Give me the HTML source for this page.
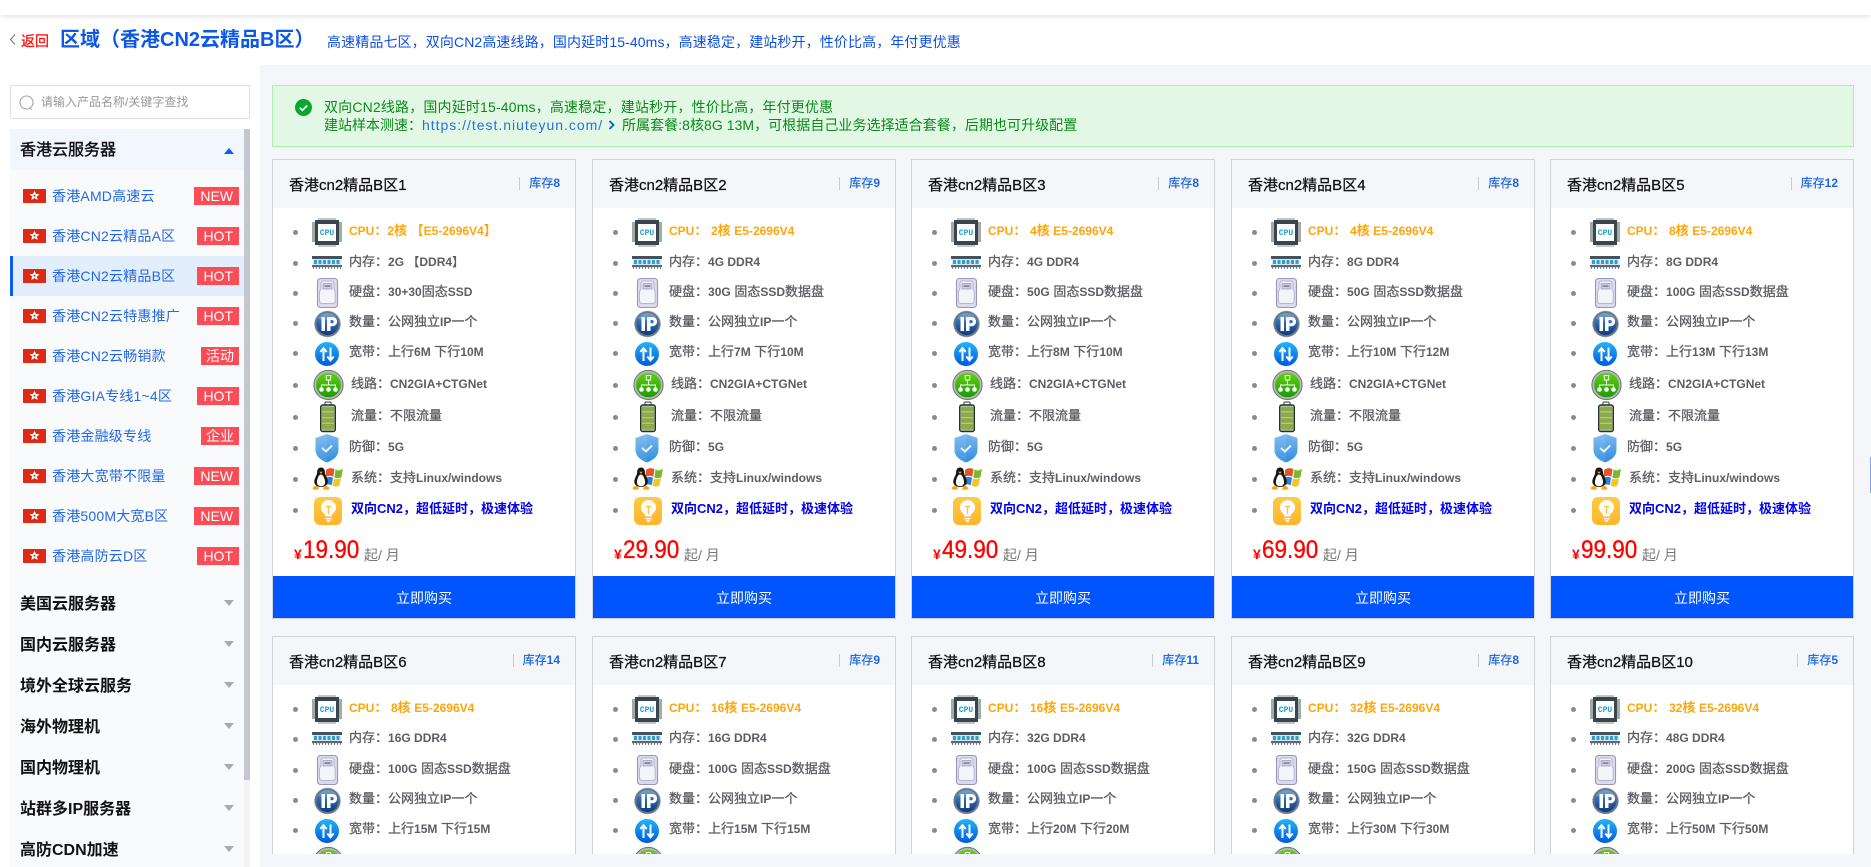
<!DOCTYPE html>
<html lang="zh-CN"><head><meta charset="utf-8"><title>区域（香港CN2云精品B区）</title>
<style>
*{box-sizing:border-box;margin:0;padding:0}
html,body{width:1871px;height:867px;overflow:hidden;background:#fff;font-family:"Liberation Sans","Noto Sans CJK SC",sans-serif}
#top{position:absolute;left:0;top:0;width:1871px;height:15px;background:#fff;box-shadow:0 1px 6px rgba(0,0,0,.14);z-index:3}
#main{position:absolute;left:260px;top:65px;width:1611px;height:802px;background:#f5f6fa}
#back{position:absolute;left:21px;top:31px;font-size:14px;line-height:20px;font-weight:400;-webkit-text-stroke:.3px #f11;color:#f11}
#title{position:absolute;left:60px;top:26px;font-size:20px;line-height:29px;font-weight:700;color:#0b57e8;white-space:nowrap}
#sub{position:absolute;left:327px;top:31px;font-size:14px;line-height:22px;color:#0b4fe0;white-space:nowrap;letter-spacing:.11px}
#search{position:absolute;left:10px;top:85px;width:240px;height:34px;border:1px solid #dcdfe6;border-radius:2px;background:#fff;font-size:12px;color:#999;line-height:32px;padding-left:30px}
#side{position:absolute;left:10px;top:129px;width:234px;height:738px;background:#f9fafc;overflow:hidden}
#sb{position:absolute;left:244px;top:129px;width:6px;height:738px;background:#f3f3f3}
#sb i{display:block;height:651px;background:#c3c7cf}
.mh{position:absolute;left:0;width:234px;height:41px;line-height:43px;padding-left:10px;font-size:16px;font-weight:700;color:#111;white-space:nowrap}
.mh i{position:absolute;left:214px;top:17px;border:5px solid transparent;border-top:6px solid #aaa;border-bottom:0}
.mh.on{background:#f1f6ff;font-weight:400;-webkit-text-stroke:.4px #111}
.mh.on i{border-top:0;border-bottom:6px solid #0b5cf0}
.it{position:absolute;left:0;width:234px;height:40px;line-height:40px;padding-left:42px;font-size:14px;color:#2468e4;white-space:nowrap;letter-spacing:.2px}
.it.on{background:#e2eefc;box-shadow:inset 3px 0 0 #0b5cf0}
.it svg{position:absolute;left:13px;top:13px;width:23px;height:14px}
.it b{position:absolute;right:5px;top:11px;height:18px;line-height:18px;padding:0 6px;background:#fb4d55;color:#fff;font-size:14px;font-weight:400;letter-spacing:0}
.it b.z{padding:0 5px}
#clip{position:absolute;left:0;top:0;width:1871px;height:854px;overflow:hidden}
#note{position:absolute;left:272px;top:85px;width:1582px;height:62px;background:#e2f7e4;border:1px solid #abf0ac;color:#0a8a1a;font-size:14px;line-height:19px}
#note div{position:absolute;left:51px;white-space:nowrap}
#note a{color:#2a6fe8;letter-spacing:.98px;text-decoration:none}
.card{position:absolute;width:304px;height:460px;background:#fff;border:1px solid #d3d3da}
.card.r2{height:219px;overflow:hidden}
.h{position:absolute;left:0;top:0;width:302px;height:48px;background:#f5f6fa}
.t{position:absolute;left:16px;top:14px;font-size:15px;line-height:24px;font-weight:400;-webkit-text-stroke:.25px #111;color:#111;white-space:nowrap}
.s{position:absolute;right:15px;top:17px;font-size:12px;line-height:13px;font-weight:400;-webkit-text-stroke:.2px #1a66e0;color:#1a66e0;border-left:1px solid #ccc;padding-left:9px;white-space:nowrap;height:13px}
.s b{font-weight:700;-webkit-text-stroke:0}
.r{position:absolute;left:76px;height:0;white-space:nowrap;font-size:13px;font-weight:400;-webkit-text-stroke:.3px #5c5e63;color:#5c5e63;line-height:0}
.r u{text-decoration:none;font-size:12px;font-weight:700;-webkit-text-stroke:0}
.r.x{left:78px}
.r::before{content:"";position:absolute;width:5px;height:5px;border-radius:50%;background:#8a8a94;top:-1px;left:-56px}
.r.x::before{left:-58px}
.r svg{position:absolute;top:-17px;left:-39px;width:34px;height:34px}
.r.x svg{left:-41px}
.c{color:#ffa50a;font-weight:700;-webkit-text-stroke:0}
.r.l{color:#0000f0;font-weight:700;-webkit-text-stroke:0}
.p{position:absolute;left:21px;top:375px;height:36px;white-space:nowrap;color:#f00}
.p em{font-style:normal;font-size:14px;font-weight:700;position:absolute;left:0;top:10px;line-height:18px}
.p b{font-weight:400;-webkit-text-stroke:.35px #f00;font-size:25px;line-height:30px;position:absolute;left:9px;top:0;display:block;transform:scaleX(.9);transform-origin:0 0}
.p i{font-style:normal;font-size:14px;color:#777;position:absolute;left:70px;top:10px;line-height:20px}
.b{position:absolute;left:0;top:416px;width:302px;height:42px;background:#0055ff;color:#fff;font-size:14px;line-height:44px;text-align:center}
.r.c{-webkit-text-stroke:0}
</style></head><body>
<svg width="0" height="0" style="position:absolute">
<defs>
<linearGradient id="gb" x1="0" y1="0" x2="0" y2="1"><stop offset="0" stop-color="#22b4f8"/><stop offset="1" stop-color="#0059dc"/></linearGradient>
<linearGradient id="gg" x1="0" y1="0" x2="0" y2="1"><stop offset="0" stop-color="#66cc18"/><stop offset=".5" stop-color="#3cb808"/><stop offset="1" stop-color="#1f9a04"/></linearGradient>
<linearGradient id="gi" x1="0" y1="0" x2="0" y2="1"><stop offset="0" stop-color="#4f8cd0"/><stop offset="1" stop-color="#0c3a80"/></linearGradient>
<linearGradient id="gs" x1="0" y1="0" x2="0" y2="1"><stop offset="0" stop-color="#7ab8ee"/><stop offset="1" stop-color="#2f8ee0"/></linearGradient>
<linearGradient id="gy" x1="0" y1="0" x2="0" y2="1"><stop offset="0" stop-color="#ffcb45"/><stop offset="1" stop-color="#ffb52b"/></linearGradient>
<symbol id="fl" viewBox="0 0 23 14"><rect width="23" height="14" fill="#de2a12"/><path d="M11.5 1.800l1.500 3.200 3.500.3-2.700 2.300.9 3.400-3.200-1.900-3.200 1.900.9-3.400-2.700-2.300 3.500-.3z" fill="#fff"/><circle cx="11.5" cy="6.800" r="1" fill="#de2a12"/></symbol>
<symbol id="i1" viewBox="0 0 34 34"><path d="M9 4v3M11 4v3M13 4v3M15 4v3M17 4v3M19 4v3M21 4v3M23 4v3M25 4v3M9 30v3M11 30v3M13 30v3M15 30v3M17 30v3M19 30v3M21 30v3M23 30v3M25 30v3" stroke="#8a8f94" stroke-width="1"/><path d="M2 9h4M2 11h4M2 13h4M2 15h4M2 17h4M2 19h4M2 21h4M2 23h4M2 25h4M2 27h4M28 9h4M28 11h4M28 13h4M28 15h4M28 17h4M28 19h4M28 21h4M28 23h4M28 25h4M28 27h4" stroke="#4a5358" stroke-width="1"/><rect x="5" y="6" width="24" height="25" fill="#38464d"/><rect x="8" y="10" width="18" height="17" fill="#fff"/><text x="17" y="21" font-family="Liberation Mono,monospace" font-size="8" font-weight="700" fill="#1c9fd0" text-anchor="middle" style="-webkit-text-stroke:0">CPU</text></symbol>
<symbol id="i2" viewBox="0 0 34 34"><rect x="2" y="11" width="30" height="3" fill="#46525a"/><rect x="3" y="14" width="28" height="6" fill="#d9e6ee"/><path d="M4 15h3v4H4zM8.500 15h3v4h-3zM13 15h3v4h-3zM17.500 15h3v4h-3zM22 15h3v4h-3zM26.500 15h3v4h-3z" fill="#2f9fd0"/><rect x="2" y="20" width="30" height="2.200" fill="#5b6a70"/><path d="M3 22h1v2H3zM6 22h1v2H6zM9 22h1v2H9zM12 22h1v2h-1zM15 22h1v2h-1zM18 22h1v2h-1zM21 22h1v2h-1zM24 22h1v2h-1zM27 22h1v2h-1zM30 22h1v2h-1z" fill="#77858a"/></symbol>
<symbol id="i3" viewBox="0 0 34 34"><rect x="7.500" y="3.500" width="20" height="29" rx="3" fill="#dcdbee" stroke="#9996bc" stroke-width="1.100"/><path d="M11 9c0-2 .8-3 2.500-3h8c1.700 0 2.500 1 2.500 3v4.500c0 1.500 1.200 1.800 1.200 3.500v8.500c0 2-1 3-2.500 3H12c-1.600 0-2.500-1-2.500-3V17c0-1.700 1.500-2 1.500-3.500z" fill="#f4f4fb" stroke="#b6b4d2"/><rect x="13" y="8.500" width="9" height="5.500" fill="#d0cfe6" stroke="#9996bc" stroke-width=".7"/><rect x="14.500" y="10.300" width="6" height="1.600" fill="#7f7da6"/></symbol>
<symbol id="i4" viewBox="0 0 34 34"><circle cx="17.500" cy="19" r="13" fill="#6d7680" stroke="#a8adb3" stroke-width=".8" stroke-dasharray="2 1.200"/><circle cx="17.500" cy="19" r="11" fill="url(#gi)"/><path d="M17.500 8a11 11 0 0 1 9.500 5.500c-5 3-14 3-19 0A11 11 0 0 1 17.500 8z" fill="#fff" opacity=".18"/><path d="M11.500 12h3.500v14h-3.500zM17 12h5.500a4.600 4.600 0 0 1 0 9.200H20.500V26H17zM20.500 15v3.200h1.600a1.600 1.600 0 0 0 0-3.200z" fill="#fff" fill-rule="evenodd"/></symbol>
<symbol id="i5" viewBox="0 0 34 34"><circle cx="17" cy="19" r="12" fill="url(#gb)"/><path d="M13.500 26V14M10.300 17l3.200-3.800 3.200 3.800M20.500 12.500V24.500M17.300 21.500l3.200 3.800 3.200-3.800" fill="none" stroke="#fff" stroke-width="2"/></symbol>
<symbol id="i6" viewBox="0 0 34 34"><circle cx="18.500" cy="18" r="15" fill="#b4b7b7"/><circle cx="18.500" cy="18" r="14.600" fill="none" stroke="#6f7575" stroke-width="1"/><circle cx="18.500" cy="18" r="12.300" fill="url(#gg)"/><path d="M18.500 13v5M11.500 21v-3h14v3" fill="none" stroke="#fff" stroke-width="1"/><path d="M16.300 8.500h4.400v4.500h-4.400z" fill="none" stroke="#fff" stroke-width="1"/><circle cx="11.500" cy="22.500" r="2.300" fill="#fff"/><circle cx="18.500" cy="22.500" r="2.300" fill="#fff"/><circle cx="25.500" cy="22.500" r="2.300" fill="#fff"/></symbol>
<symbol id="i7" viewBox="0 0 34 34"><path d="M15 6V4c0-.6.400-1 1-1h4c.6 0 1 .4 1 1v2" fill="none" stroke="#2d3d34" stroke-width="1"/><rect x="10.700" y="6" width="14.600" height="26.500" rx="2" fill="#b7c3a0" stroke="#24332c" stroke-width="1.400"/><path d="M12 8h12v4.300H12zM12 13.500h12v4.500H12zM12 19.200h12v4.500H12zM12 25h12v5.500H12z" fill="#8cab46"/></symbol>
<symbol id="i8" viewBox="0 0 34 34"><path d="M17 4l11.500 4v12c0 6-5 10-11.500 12.500C10.500 30 5.500 26 5.500 20V8z" fill="url(#gs)"/><path d="M17 4v28.500C10.500 30 5.500 26 5.500 20V8z" fill="#fff" opacity=".08"/><path d="M12 18l4 3.500 6-6" fill="none" stroke="#e4f2fc" stroke-width="2"/></symbol>
<symbol id="i9" viewBox="0 0 34 34"><path d="M16 9c3-2.300 5.500-2.300 8.500-.8l-1.200 7.500c-2.500-1.300-5-1.300-7.500.300z" fill="#e5532a"/><path d="M25.500 8.500c2.500 1.300 5 1.300 7.500-1l-1.500 8.500c-2.500 1.700-5 1.500-7 .500z" fill="#79b92b"/><path d="M15.500 17c2.500-1.500 5-1.500 7.500-.3l-1.200 7.500c-2.300-1-5-1-7.300.3z" fill="#2f7fd8"/><path d="M24 17.500c2.300 1 4.700 1 7-.5l-1.500 7.500c-2.300 1.500-4.700 1.500-6.800.3z" fill="#f7c51f"/><path d="M11 6.500c2.800 0 4 2.300 4 5 0 2.800 2.300 4.700 2.800 8.500.3 3-2 6-6.800 6S4 23 4.300 20c.5-3.800 2.800-5.700 2.800-8.500 0-2.700 1.100-5 3.900-5z" fill="#161616"/><path d="M11 13.500c2 0 3.200 3 4 6.500.5 3-1 5.200-4 5.200S6.500 23 7 20c.7-3.500 2-6.500 4-6.500z" fill="#fff"/><path d="M9.200 10.800h3.600L11 12.800z" fill="#f5a81c"/><path d="M2.500 27.500c.8-2.200 3-3.200 5.200-2.300l1.300 2.800c-2.200 1.200-5.500 1-6.500-.5zM19.500 27.500c-.8-2.200-3-3.200-5.200-2.300L13 28c2.200 1.200 5.500 1 6.500-.5z" fill="#f5a81c"/></symbol>
<symbol id="i10" viewBox="0 0 34 34"><rect x="4" y="5" width="28" height="28" rx="6" fill="url(#gy)"/><path d="M18.500 8a7.500 7.500 0 0 0-4.200 13.700c.8.700 1 1.500 1.100 2.800h6.200c.1-1.300.3-2.100 1.100-2.800A7.500 7.500 0 0 0 18.500 8z" fill="#fff"/><path d="M15.500 26h6v1.400h-6zM16.300 28.200h4.400l-1 1.600h-2.400z" fill="#fff"/><path d="M15.800 14.500h5.400M18.500 14.500v7.500" stroke="#ffc23d" stroke-width="1.300" fill="none"/></symbol>
</defs></svg>

<div id="main"></div>
<div id="top"></div>

<svg style="position:absolute;left:9px;top:33px" width="7" height="13" viewBox="0 0 7 13"><path d="M6 1.500L1.500 6.500 6 11.500" fill="none" stroke="#777" stroke-width="1.100"/></svg>
<div id="back">返回</div>
<div id="title">区域（香港CN2云精品B区）</div>
<div id="sub">高速精品七区，双向CN2高速线路，国内延时15-40ms，高速稳定，建站秒开，性价比高，年付更优惠</div>

<div id="search">请输入产品名称/关键字查找<svg style="position:absolute;left:8px;top:9px" width="16" height="16" viewBox="0 0 16 16"><circle cx="7.500" cy="7.500" r="6.500" fill="none" stroke="#a5a5a5" stroke-width="1.100"/><path d="M11 13l1.500 1.800" stroke="#a5a5a5" stroke-width="1.100"/></svg></div>

<div id="side">
<div class="mh on" style="top:0">香港云服务器<i style="top:19px"></i></div>
<div class="it" style="top:47px"><svg><use href="#fl"/></svg>香港AMD高速云<b>NEW</b></div>
<div class="it" style="top:87px"><svg><use href="#fl"/></svg>香港CN2云精品A区<b>HOT</b></div>
<div class="it on" style="top:127px"><svg><use href="#fl"/></svg>香港CN2云精品B区<b>HOT</b></div>
<div class="it" style="top:167px"><svg><use href="#fl"/></svg>香港CN2云特惠推广<b>HOT</b></div>
<div class="it" style="top:207px"><svg><use href="#fl"/></svg>香港CN2云畅销款<b class="z">活动</b></div>
<div class="it" style="top:247px"><svg><use href="#fl"/></svg>香港GIA专线1~4区<b>HOT</b></div>
<div class="it" style="top:287px"><svg><use href="#fl"/></svg>香港金融级专线<b class="z">企业</b></div>
<div class="it" style="top:327px"><svg><use href="#fl"/></svg>香港大宽带不限量<b>NEW</b></div>
<div class="it" style="top:367px"><svg><use href="#fl"/></svg>香港500M大宽B区<b>NEW</b></div>
<div class="it" style="top:407px"><svg><use href="#fl"/></svg>香港高防云D区<b>HOT</b></div>
<div class="mh" style="top:454px">美国云服务器<i></i></div>
<div class="mh" style="top:495px">国内云服务器<i></i></div>
<div class="mh" style="top:536px">境外全球云服务<i></i></div>
<div class="mh" style="top:577px">海外物理机<i></i></div>
<div class="mh" style="top:618px">国内物理机<i></i></div>
<div class="mh" style="top:659px">站群多IP服务器<i></i></div>
<div class="mh" style="top:700px;height:38px;overflow:hidden">高防CDN加速<i></i></div>
</div>
<div id="sb"><i></i></div>

<div id="clip">
<div id="note">
<svg style="position:absolute;left:22px;top:13px" width="17" height="17" viewBox="0 0 17 17"><circle cx="8.500" cy="8.500" r="8.500" fill="#07a832"/><path d="M4.800 8.800l2.600 2.500 4.800-4.800" fill="none" stroke="#fff" stroke-width="1.700"/></svg>
<div style="top:12px;letter-spacing:.17px">双向CN2线路，国内延时15-40ms，高速稳定，建站秒开，性价比高，年付更优惠</div>
<div style="top:30px">建站样本测速：<a>https://test.niuteyun.com/</a></div>
<svg style="position:absolute;left:335px;top:34px" width="7" height="10" viewBox="0 0 7 10"><path d="M1.500 1L5.500 5 1.500 9" fill="none" stroke="#0b5cc0" stroke-width="1.800"/></svg>
<div style="top:30px;left:349px;letter-spacing:.05px">所属套餐:8核8G 13M，可根据自己业务选择适合套餐，后期也可升级配置</div>
</div>

<div class="card" style="left:272px;top:159px"><div class="h"><div class="t">香港cn2精品B区1</div><div class="s">库存<b>8</b></div></div>
<div class="r c" style="top:71px"><svg><use href="#i1"/></svg><u>CPU</u>：<u>2</u>核 【<u>E5-2696V4</u>】</div>
<div class="r" style="top:102px"><svg><use href="#i2"/></svg>内存：<u>2G 【DDR4】</u></div>
<div class="r" style="top:132px"><svg><use href="#i3"/></svg>硬盘：<u>30+30</u>固态<u>SSD</u></div>
<div class="r" style="top:162px"><svg><use href="#i4"/></svg>数量：公网独立<u>IP</u>一个</div>
<div class="r" style="top:192px"><svg><use href="#i5"/></svg>宽带：上行<u>6M</u> 下行<u>10M</u></div>
<div class="r x" style="top:224px"><svg><use href="#i6"/></svg>线路：<u>CN2GIA+CTGNet</u></div>
<div class="r x" style="top:256px"><svg><use href="#i7"/></svg>流量：不限流量</div>
<div class="r" style="top:287px"><svg><use href="#i8"/></svg>防御：<u>5G</u></div>
<div class="r x" style="top:318px"><svg><use href="#i9"/></svg>系统：支持<u>Linux/windows</u></div>
<div class="r x l" style="top:349px"><svg><use href="#i10"/></svg>双向CN2，超低延时，极速体验</div>
<div class="p"><em>¥</em><b>19.90</b><i>起/ 月</i></div><div class="b">立即购买</div></div>

<div class="card" style="left:592px;top:159px"><div class="h"><div class="t">香港cn2精品B区2</div><div class="s">库存<b>9</b></div></div>
<div class="r c" style="top:71px"><svg><use href="#i1"/></svg><u>CPU</u>： <u>2</u>核 <u>E5-2696V4</u></div>
<div class="r" style="top:102px"><svg><use href="#i2"/></svg>内存：<u>4G DDR4</u></div>
<div class="r" style="top:132px"><svg><use href="#i3"/></svg>硬盘：<u>30G</u> 固态<u>SSD</u>数据盘</div>
<div class="r" style="top:162px"><svg><use href="#i4"/></svg>数量：公网独立<u>IP</u>一个</div>
<div class="r" style="top:192px"><svg><use href="#i5"/></svg>宽带：上行<u>7M</u> 下行<u>10M</u></div>
<div class="r x" style="top:224px"><svg><use href="#i6"/></svg>线路：<u>CN2GIA+CTGNet</u></div>
<div class="r x" style="top:256px"><svg><use href="#i7"/></svg>流量：不限流量</div>
<div class="r" style="top:287px"><svg><use href="#i8"/></svg>防御：<u>5G</u></div>
<div class="r x" style="top:318px"><svg><use href="#i9"/></svg>系统：支持<u>Linux/windows</u></div>
<div class="r x l" style="top:349px"><svg><use href="#i10"/></svg>双向CN2，超低延时，极速体验</div>
<div class="p"><em>¥</em><b>29.90</b><i>起/ 月</i></div><div class="b">立即购买</div></div>

<div class="card" style="left:911px;top:159px"><div class="h"><div class="t">香港cn2精品B区3</div><div class="s">库存<b>8</b></div></div>
<div class="r c" style="top:71px"><svg><use href="#i1"/></svg><u>CPU</u>： <u>4</u>核 <u>E5-2696V4</u></div>
<div class="r" style="top:102px"><svg><use href="#i2"/></svg>内存：<u>4G DDR4</u></div>
<div class="r" style="top:132px"><svg><use href="#i3"/></svg>硬盘：<u>50G</u> 固态<u>SSD</u>数据盘</div>
<div class="r" style="top:162px"><svg><use href="#i4"/></svg>数量：公网独立<u>IP</u>一个</div>
<div class="r" style="top:192px"><svg><use href="#i5"/></svg>宽带：上行<u>8M</u> 下行<u>10M</u></div>
<div class="r x" style="top:224px"><svg><use href="#i6"/></svg>线路：<u>CN2GIA+CTGNet</u></div>
<div class="r x" style="top:256px"><svg><use href="#i7"/></svg>流量：不限流量</div>
<div class="r" style="top:287px"><svg><use href="#i8"/></svg>防御：<u>5G</u></div>
<div class="r x" style="top:318px"><svg><use href="#i9"/></svg>系统：支持<u>Linux/windows</u></div>
<div class="r x l" style="top:349px"><svg><use href="#i10"/></svg>双向CN2，超低延时，极速体验</div>
<div class="p"><em>¥</em><b>49.90</b><i>起/ 月</i></div><div class="b">立即购买</div></div>

<div class="card" style="left:1231px;top:159px"><div class="h"><div class="t">香港cn2精品B区4</div><div class="s">库存<b>8</b></div></div>
<div class="r c" style="top:71px"><svg><use href="#i1"/></svg><u>CPU</u>： <u>4</u>核 <u>E5-2696V4</u></div>
<div class="r" style="top:102px"><svg><use href="#i2"/></svg>内存：<u>8G DDR4</u></div>
<div class="r" style="top:132px"><svg><use href="#i3"/></svg>硬盘：<u>50G</u> 固态<u>SSD</u>数据盘</div>
<div class="r" style="top:162px"><svg><use href="#i4"/></svg>数量：公网独立<u>IP</u>一个</div>
<div class="r" style="top:192px"><svg><use href="#i5"/></svg>宽带：上行<u>10M</u> 下行<u>12M</u></div>
<div class="r x" style="top:224px"><svg><use href="#i6"/></svg>线路：<u>CN2GIA+CTGNet</u></div>
<div class="r x" style="top:256px"><svg><use href="#i7"/></svg>流量：不限流量</div>
<div class="r" style="top:287px"><svg><use href="#i8"/></svg>防御：<u>5G</u></div>
<div class="r x" style="top:318px"><svg><use href="#i9"/></svg>系统：支持<u>Linux/windows</u></div>
<div class="r x l" style="top:349px"><svg><use href="#i10"/></svg>双向CN2，超低延时，极速体验</div>
<div class="p"><em>¥</em><b>69.90</b><i>起/ 月</i></div><div class="b">立即购买</div></div>

<div class="card" style="left:1550px;top:159px"><div class="h"><div class="t">香港cn2精品B区5</div><div class="s">库存<b>12</b></div></div>
<div class="r c" style="top:71px"><svg><use href="#i1"/></svg><u>CPU</u>： <u>8</u>核 <u>E5-2696V4</u></div>
<div class="r" style="top:102px"><svg><use href="#i2"/></svg>内存：<u>8G DDR4</u></div>
<div class="r" style="top:132px"><svg><use href="#i3"/></svg>硬盘：<u>100G</u> 固态<u>SSD</u>数据盘</div>
<div class="r" style="top:162px"><svg><use href="#i4"/></svg>数量：公网独立<u>IP</u>一个</div>
<div class="r" style="top:192px"><svg><use href="#i5"/></svg>宽带：上行<u>13M</u> 下行<u>13M</u></div>
<div class="r x" style="top:224px"><svg><use href="#i6"/></svg>线路：<u>CN2GIA+CTGNet</u></div>
<div class="r x" style="top:256px"><svg><use href="#i7"/></svg>流量：不限流量</div>
<div class="r" style="top:287px"><svg><use href="#i8"/></svg>防御：<u>5G</u></div>
<div class="r x" style="top:318px"><svg><use href="#i9"/></svg>系统：支持<u>Linux/windows</u></div>
<div class="r x l" style="top:349px"><svg><use href="#i10"/></svg>双向CN2，超低延时，极速体验</div>
<div class="p"><em>¥</em><b>99.90</b><i>起/ 月</i></div><div class="b">立即购买</div></div>

<div class="card r2" style="left:272px;top:636px"><div class="h"><div class="t">香港cn2精品B区6</div><div class="s">库存<b>14</b></div></div>
<div class="r c" style="top:71px"><svg><use href="#i1"/></svg><u>CPU</u>： <u>8</u>核 <u>E5-2696V4</u></div>
<div class="r" style="top:101px"><svg><use href="#i2"/></svg>内存：<u>16G DDR4</u></div>
<div class="r" style="top:132px"><svg><use href="#i3"/></svg>硬盘：<u>100G</u> 固态<u>SSD</u>数据盘</div>
<div class="r" style="top:162px"><svg><use href="#i4"/></svg>数量：公网独立<u>IP</u>一个</div>
<div class="r" style="top:192px"><svg><use href="#i5"/></svg>宽带：上行<u>15M</u> 下行<u>15M</u></div>
<div class="r x" style="top:224px"><svg><use href="#i6"/></svg></div></div>

<div class="card r2" style="left:592px;top:636px"><div class="h"><div class="t">香港cn2精品B区7</div><div class="s">库存<b>9</b></div></div>
<div class="r c" style="top:71px"><svg><use href="#i1"/></svg><u>CPU</u>： <u>16</u>核 <u>E5-2696V4</u></div>
<div class="r" style="top:101px"><svg><use href="#i2"/></svg>内存：<u>16G DDR4</u></div>
<div class="r" style="top:132px"><svg><use href="#i3"/></svg>硬盘：<u>100G</u> 固态<u>SSD</u>数据盘</div>
<div class="r" style="top:162px"><svg><use href="#i4"/></svg>数量：公网独立<u>IP</u>一个</div>
<div class="r" style="top:192px"><svg><use href="#i5"/></svg>宽带：上行<u>15M</u> 下行<u>15M</u></div>
<div class="r x" style="top:224px"><svg><use href="#i6"/></svg></div></div>

<div class="card r2" style="left:911px;top:636px"><div class="h"><div class="t">香港cn2精品B区8</div><div class="s">库存<b>11</b></div></div>
<div class="r c" style="top:71px"><svg><use href="#i1"/></svg><u>CPU</u>： <u>16</u>核 <u>E5-2696V4</u></div>
<div class="r" style="top:101px"><svg><use href="#i2"/></svg>内存：<u>32G DDR4</u></div>
<div class="r" style="top:132px"><svg><use href="#i3"/></svg>硬盘：<u>100G</u> 固态<u>SSD</u>数据盘</div>
<div class="r" style="top:162px"><svg><use href="#i4"/></svg>数量：公网独立<u>IP</u>一个</div>
<div class="r" style="top:192px"><svg><use href="#i5"/></svg>宽带：上行<u>20M</u> 下行<u>20M</u></div>
<div class="r x" style="top:224px"><svg><use href="#i6"/></svg></div></div>

<div class="card r2" style="left:1231px;top:636px"><div class="h"><div class="t">香港cn2精品B区9</div><div class="s">库存<b>8</b></div></div>
<div class="r c" style="top:71px"><svg><use href="#i1"/></svg><u>CPU</u>： <u>32</u>核 <u>E5-2696V4</u></div>
<div class="r" style="top:101px"><svg><use href="#i2"/></svg>内存：<u>32G DDR4</u></div>
<div class="r" style="top:132px"><svg><use href="#i3"/></svg>硬盘：<u>150G</u> 固态<u>SSD</u>数据盘</div>
<div class="r" style="top:162px"><svg><use href="#i4"/></svg>数量：公网独立<u>IP</u>一个</div>
<div class="r" style="top:192px"><svg><use href="#i5"/></svg>宽带：上行<u>30M</u> 下行<u>30M</u></div>
<div class="r x" style="top:224px"><svg><use href="#i6"/></svg></div></div>

<div class="card r2" style="left:1550px;top:636px"><div class="h"><div class="t">香港cn2精品B区10</div><div class="s">库存<b>5</b></div></div>
<div class="r c" style="top:71px"><svg><use href="#i1"/></svg><u>CPU</u>： <u>32</u>核 <u>E5-2696V4</u></div>
<div class="r" style="top:101px"><svg><use href="#i2"/></svg>内存：<u>48G DDR4</u></div>
<div class="r" style="top:132px"><svg><use href="#i3"/></svg>硬盘：<u>200G</u> 固态<u>SSD</u>数据盘</div>
<div class="r" style="top:162px"><svg><use href="#i4"/></svg>数量：公网独立<u>IP</u>一个</div>
<div class="r" style="top:192px"><svg><use href="#i5"/></svg>宽带：上行<u>50M</u> 下行<u>50M</u></div>
<div class="r x" style="top:224px"><svg><use href="#i6"/></svg></div></div>
</div>
<div style="position:absolute;left:1870px;top:457px;width:1px;height:36px;background:#8aa4e8"></div>
</body></html>
